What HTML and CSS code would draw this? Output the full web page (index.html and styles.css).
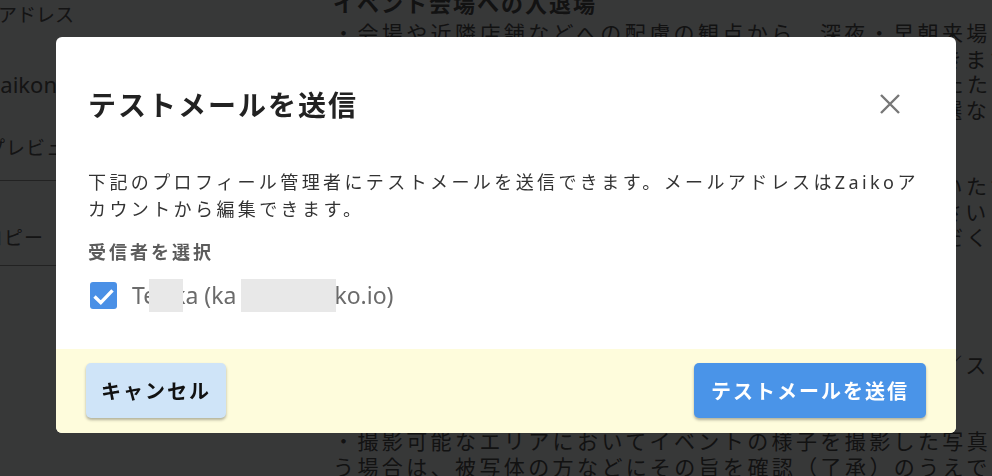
FILE: index.html
```html
<!DOCTYPE html>
<html lang="ja">
<head>
<meta charset="utf-8">
<title>テストメールを送信</title>
<link rel="stylesheet" href="styles.css">
</head>
<body>
<div class="page">
  <aside class="side">
    <div class="side-row">
      <div class="side-label">メールアドレス</div>
      <div class="side-value">zaikonews@zaiko.io</div>
    </div>
    <div class="side-row side-preview">
      <div class="side-label">プレビュー</div>
    </div>
    <div class="side-row side-copy">
      <div class="side-label">コピー</div>
    </div>
  </aside>
  <main class="content">
    <h2 class="content-title">イベント会場への入退場</h2>
    <p class="para">・会場や近隣店舗などへの配慮の観点から、深夜・早朝来場<br>はご遠慮いただきますようお願いいたします。入場はできます<br>が、開場時間まで会場周辺でお待ちいただくことになるたた<br>め、ご来場の際は時間に余裕をもってお越しください。選な</p>
    <p class="para">・体調がすぐれない場合は無理をせず、ご来場をお控えいただ<br>ますようお願いします。詳細は公式サイトでご確認ください<br>い。ご不明点は、お問い合わせフォームよりご連絡いただく</p>
    <p class="para">・録音・録画・撮影について<br>ご協力をお願いいたします。<br>・録音、録画は固くお断りいたします。また動画の撮影／ス</p>
    <p class="para">・撮影可能なエリアにおいてイベントの様子を撮影した写真<br>う場合は、被写体の方などにその旨を確認（了承）のうえで</p>
  </main>
</div>

<div class="backdrop"></div>

<div class="modal" role="dialog" aria-labelledby="modal-title">
  <header class="modal-header">
    <h1 class="modal-title" id="modal-title">テストメールを送信</h1>
    <button class="modal-close" aria-label="閉じる">
      <svg width="20" height="20" viewBox="0 0 20 20"><path d="M1 1L19 19M19 1L1 19" stroke="#777" stroke-width="2.4" fill="none"/></svg>
    </button>
  </header>
  <div class="modal-body">
    <p class="modal-desc">下記のプロフィール管理者にテストメールを送信できます。メールアドレスはZaikoアカウントから編集できます。</p>
    <div class="field-label">受信者を選択</div>
    <label class="recipient">
      <span class="checkbox">
        <svg width="27" height="27" viewBox="0 0 27 27"><path d="M4.5 14.5L10.8 20.6L22.5 8.3" stroke="#fff" stroke-width="3.4" fill="none"/></svg>
      </span>
      <span class="recipient-name">Te<span class="redact redact-a"></span>ka (ka<span class="redact redact-b"></span>ko.io)</span>
    </label>
  </div>
  <footer class="modal-footer">
    <button class="btn btn-cancel">キャンセル</button>
    <button class="btn btn-send">テストメールを送信</button>
  </footer>
</div>
</body>
</html>
```

FILE: styles.css
```css
html, body {
  margin: 0;
  padding: 0;
}

body {
  width: 992px;
  height: 476px;
  overflow: hidden;
  background: #fafcff;
  font-family: "Noto Sans", "Noto Sans CJK JP", sans-serif;
  color: #4d4d4d;
}

.page {
  display: flex;
  height: 476px;
  overflow: hidden;
}

/* ---------- background page ---------- */
.side {
  width: 285px;
  flex: none;
  overflow: hidden;
  font-family: "Noto Sans CJK JP", sans-serif;
  font-size: 19px;
  color: #5a5a5a;
}

.side-row {
  border-bottom: 1px solid #9a9a9a;
}

.side-row:first-child {
  height: 180px;
  border-bottom: none;
}

.side-label {
  margin-left: -59px;
  padding-top: 1px;
  line-height: 26px;
  white-space: nowrap;
}

.side-value {
  margin-left: -10px;
  margin-top: 42px;
  font-family: "Noto Sans", sans-serif;
  font-size: 22px;
  line-height: 30px;
  white-space: nowrap;
}

.side-preview {
  margin-top: -47px;
  height: 47px;
}

.side-preview .side-label {
  margin-left: -14px;
  letter-spacing: 1px;
}

.side-copy {
  height: 84px;
}

.side-copy .side-label {
  margin-left: -16px;
  padding-top: 43px;
  letter-spacing: 1px;
}

.content {
  flex: 1;
  margin-left: 48px;
  overflow: hidden;
  font-family: "Noto Sans CJK JP", sans-serif;
  color: #555;
}

.content-title {
  margin: -14px 0 0 0;
  font-size: 22px;
  line-height: 32px;
  letter-spacing: 2px;
  font-weight: 700;
  white-space: nowrap;
}

.para {
  margin: 0 0 51px 0;
  font-size: 21px;
  line-height: 25.5px;
  letter-spacing: 3.4px;
  white-space: nowrap;
}

.content-title + .para {
  margin-top: 2px;
}

.backdrop {
  position: fixed;
  inset: 0;
  background: rgba(0, 0, 0, 0.78);
}

/* ---------- modal ---------- */
.modal {
  position: fixed;
  left: 56px;
  top: 37px;
  width: 900px;
  height: 396px;
  background: #fff;
  border-radius: 6px;
  overflow: hidden;
  display: flex;
  flex-direction: column;
  font-family: "Noto Sans", "Noto Sans CJK JP", sans-serif;
}

.modal-header {
  display: flex;
  align-items: center;
  justify-content: space-between;
  padding: 47px 56px 0 32px;
}

.modal-title {
  margin: 0;
  font-family: "Noto Sans CJK JP", sans-serif;
  font-size: 28px;
  line-height: 40px;
  letter-spacing: 2px;
  font-weight: 700;
  color: #222;
}

.modal-close {
  width: 20px;
  height: 20px;
  padding: 0;
  border: none;
  background: none;
  display: flex;
}

.modal-body {
  flex: 1;
  padding: 45px 30px 0 32px;
}

.modal-desc {
  margin: 0;
  font-size: 18px;
  line-height: 27px;
  letter-spacing: 3.4px;
  color: #333;
}

.field-label {
  margin-top: 15px;
  font-family: "Noto Sans CJK JP", sans-serif;
  font-size: 18px;
  line-height: 27px;
  letter-spacing: 3px;
  font-weight: 700;
  color: #5c5c5c;
}

.recipient {
  display: flex;
  align-items: center;
  gap: 15px;
  margin-top: 14px;
  margin-left: 2px;
}

.checkbox {
  width: 27px;
  height: 27px;
  border-radius: 3px;
  background: #4a90e6;
  display: flex;
}

.recipient-name {
  font-family: "Noto Sans", sans-serif;
  font-size: 23px;
  line-height: 33px;
  color: #6b6b6b;
  display: flex;
  align-items: center;
  white-space: pre;
}

.redact {
  display: inline-block;
  height: 33px;
  background: #e8e8e8;
  position: relative;
}

.redact-a {
  width: 34px;
  margin-left: -7px;
  margin-right: -10px;
}

.redact-b {
  width: 95px;
  margin-left: 5px;
  margin-right: -2px;
}

.modal-footer {
  height: 84px;
  box-sizing: border-box;
  padding: 14px 30px 15px 30px;
  background: #fefcdc;
  display: flex;
  justify-content: space-between;
  align-items: flex-start;
}

.btn {
  height: 55px;
  border: none;
  border-radius: 5px;
  font-family: "Noto Sans CJK JP", sans-serif;
  font-size: 20px;
  font-weight: 700;
  letter-spacing: 2px;
  box-shadow: 0 2px 3px rgba(0, 0, 0, 0.3);
}

.btn-cancel {
  width: 140px;
  background: #cfe4f8;
  color: #111;
}

.btn-send {
  width: 232px;
  background: #4a94e8;
  color: #fff;
}
```
